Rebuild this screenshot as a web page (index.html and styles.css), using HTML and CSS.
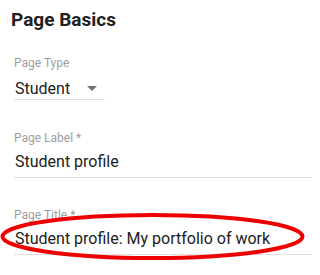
FILE: index.html
```html
<!DOCTYPE html>
<html>
<head>
<meta charset="utf-8">
<link rel="stylesheet" href="styles.css">
</head>
<body>
<div class="page">
  <h2 class="title">Page Basics</h2>
  <div class="field select-field">
    <div class="label">Page Type</div>
    <div class="select">
      <span class="value">Student</span>
      <span class="arrow"></span>
    </div>
  </div>
  <div class="field text-field">
    <div class="label">Page Label *</div>
    <div class="input"><span class="value">Student profile</span></div>
  </div>
  <div class="field text-field last">
    <div class="label">Page Title *</div>
    <div class="input"><span class="value">Student profile: My portfolio of work</span></div>
  </div>
  <svg class="mark" width="306" height="50" viewBox="0 0 306 50">
    <ellipse cx="152.5" cy="23.5" rx="150" ry="21.5" fill="none" stroke="#ee0000" stroke-width="4"/>
  </svg>
</div>
</body>
</html>
```

FILE: styles.css
```css
html, body {
  margin: 0;
  padding: 0;
  background: #ffffff;
}
body {
  font-family: Roboto, "Noto Sans", sans-serif;
  width: 312px;
  height: 275px;
  overflow: hidden;
}
.page {
  position: relative;
  padding-top: 8px;
  display: flex;
  flex-direction: column;
}
.title {
  margin: 0 0 0 11px;
  font-size: 19px;
  line-height: 24px;
  font-weight: 700;
  color: #212121;
}
.field {
  display: flex;
  flex-direction: column;
  margin-left: 14px;
}
.label {
  font-size: 12px;
  line-height: 16px;
  color: #9e9e9e;
}
.value {
  font-size: 16px;
  line-height: 20px;
  color: #212121;
  padding-left: 1px;
}
.select-field {
  margin-top: 23px;
  width: 91px;
}
.select {
  margin-top: 8px;
  display: flex;
  align-items: center;
  justify-content: space-between;
  border-bottom: 1px solid #e0e0e0;
  height: 20px;
}
.arrow {
  width: 0;
  height: 0;
  border-left: 5px solid transparent;
  border-right: 5px solid transparent;
  border-top: 5px solid #757575;
  margin-right: 8px;
  margin-top: -2px;
}
.text-field {
  margin-top: 30px;
}
.text-field.last {
  margin-top: 29px;
}
.input {
  margin-top: 6px;
  padding-bottom: 5px;
  border-bottom: 1px solid #e0e0e0;
  white-space: nowrap;
}
.mark {
  position: absolute;
  left: 0;
  top: 213px;
}
```
